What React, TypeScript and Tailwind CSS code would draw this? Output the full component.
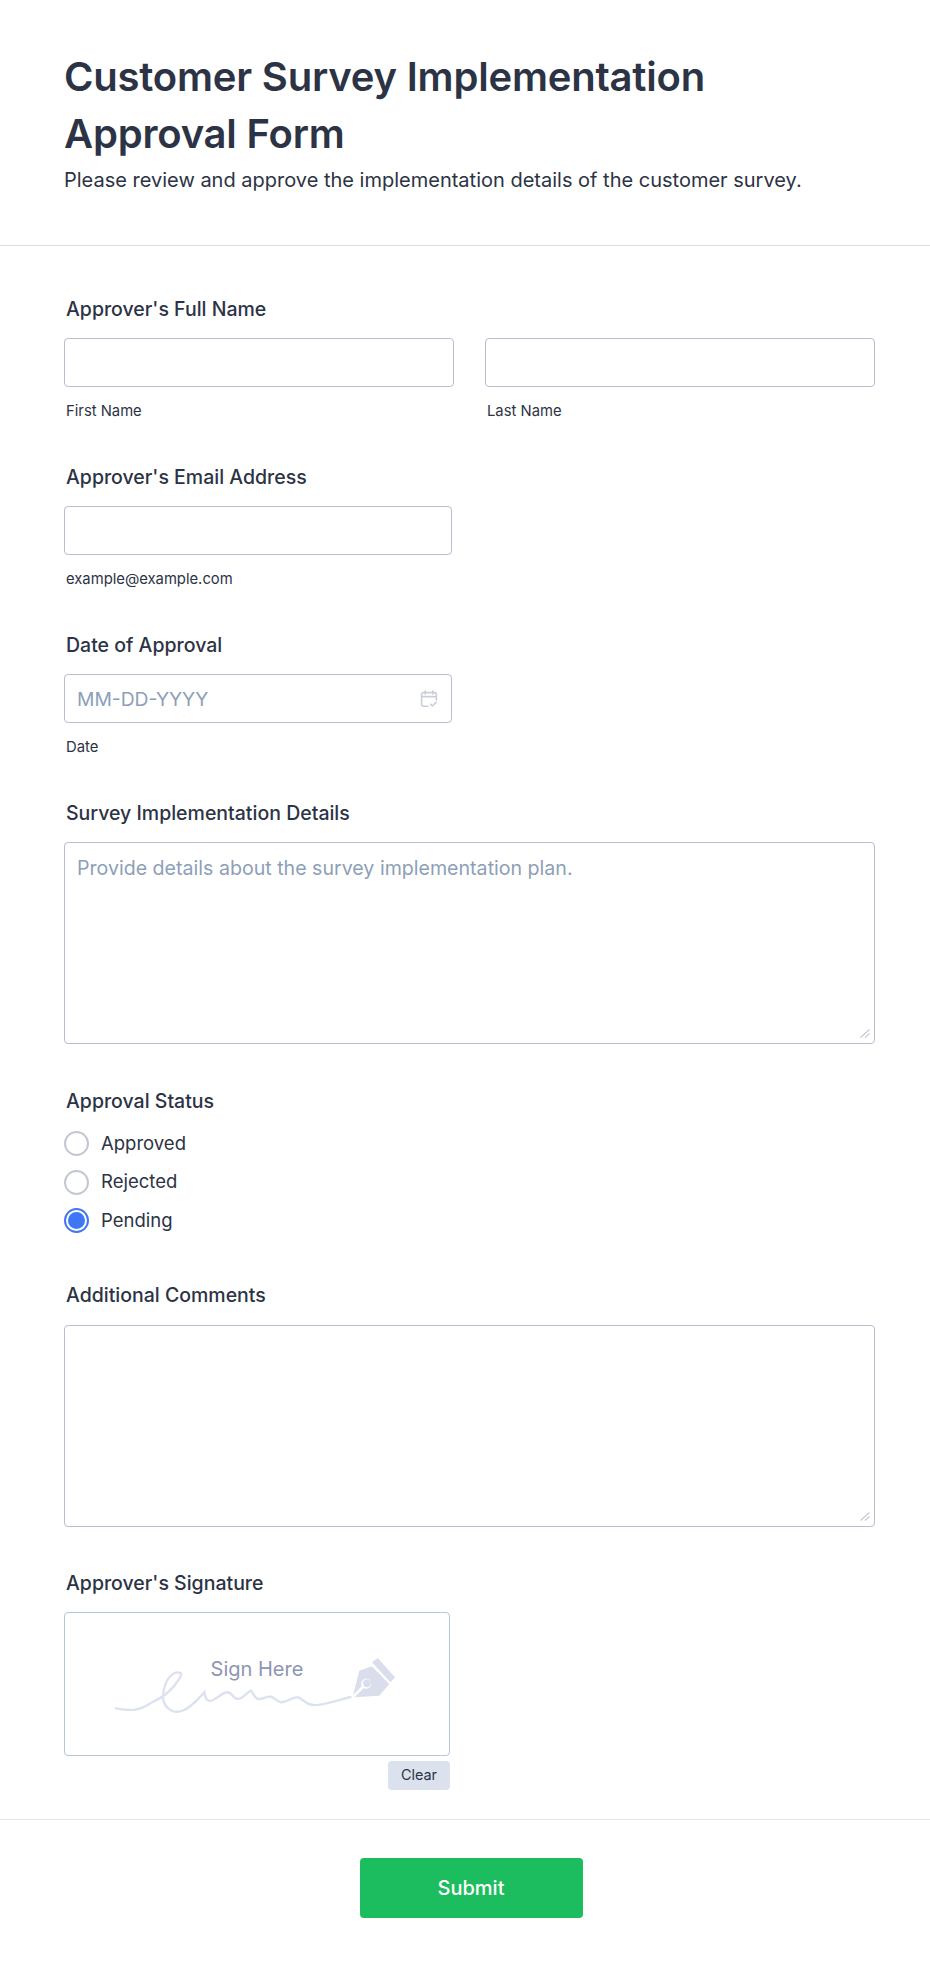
const Label = ({ children }: { children: React.ReactNode }) => (
    <label className="block pl-[2px] text-[19.5px] leading-[28px] font-medium text-[#2c3345] mb-[15.5px]">{children}</label>
);

const Sub = ({ children }: { children: React.ReactNode }) => (
    <div className="pl-[2px] mt-[14.5px] text-[14.8px] leading-[18px] text-[#2c3345]">{children}</div>
);

const inputClass =
    "block w-full h-[49px] rounded-[4px] border border-[#b8bdcf] bg-white px-[12px] text-[19.3px] outline-none placeholder:text-[#8d9fb8]";

function TextArea({ placeholder }: { placeholder?: string }) {
    return (
        <div className="relative">
            <textarea
                className="block w-full h-[202px] rounded-[4px] border border-[#b8bdcf] bg-white px-[12px] py-[11px] text-[19.6px] leading-[28px] outline-none resize-none placeholder:text-[#8d9fb8]"
                placeholder={placeholder}
            />
            <svg width="10" height="9" viewBox="0 0 10 9" fill="none" stroke="#c4c8d6" strokeWidth="1.1" className="absolute right-[5px] bottom-[6px]">
                <path d="M0.5 8.5L9.5 0.5M5 8.5L9.5 4.5" />
            </svg>
        </div>
    );
}

function Radio({ label, checked }: { label: string; checked?: boolean }) {
    return (
        <div className="flex items-center gap-[12px] h-[38.5px] text-[18.5px] text-[#2c3345]">
            {checked ? (
                <span className="flex items-center justify-center w-[25px] h-[25px] rounded-full border-2 border-[#3e76f6]">
                    <span className="w-[17px] h-[17px] rounded-full bg-[#3e76f6]" />
                </span>
            ) : (
                <span className="w-[25px] h-[25px] rounded-full border-2 border-[#c3c7d2]" />
            )}
            <span>{label}</span>
        </div>
    );
}

function CalendarIcon() {
    return (
        <svg width="18" height="18" viewBox="0 0 18 18" fill="none" stroke="#c9ced9" strokeWidth="1.6" strokeLinecap="round" strokeLinejoin="round">
            <path d="M8 16.2H3.6A2 2 0 0 1 1.6 14.2V4.6a2 2 0 0 1 2-2h10.8a2 2 0 0 1 2 2v5.4" />
            <path d="M1.6 6.6h14.8M5.2 1v3M12.8 1v3" />
            <path d="M10.6 14.2l1.8 1.8 3.6-3.6" />
        </svg>
    );
}

// coordinates are page pixels of the signature box area
function SignatureArt() {
    return (
        <svg width="290" height="60" viewBox="110 1655 290 60" fill="none" className="block">
            <path
                d="M115 1709.3 C 122 1711 128 1711 133.3 1710.7 C 141 1710 146 1706.5 150 1704 C 156 1701 161 1698 165 1695 C 171 1690 175 1685 177.5 1681 C 180.5 1677 181 1674 178 1673.5 C 172 1672.5 166 1679 163.5 1688 C 161 1697 162 1705 167 1709 C 171 1713 177 1713.5 182 1711.5 C 191 1708 198 1699 203.3 1693.3 C 204 1698 205 1702 209 1702 C 214 1702 220 1693.5 226.7 1693.3 C 231 1693.3 232 1700 237 1700 C 242 1700 246 1693 250 1691.7 C 252 1693 253 1700 258 1700 C 262 1700 266 1697 270 1697.7 C 273 1698.5 276 1702.5 280 1703.3 C 286 1703.5 291 1698 296.7 1698.3 C 301 1699 304 1705 312 1706 C 320 1707 334 1702 349.5 1698"
                stroke="#dde2f0"
                strokeWidth="2.4"
                strokeLinecap="round"
            />
            <path fill="#dadeec" d="M371 1663.3 L376.7 1659 L394 1678.3 L389.3 1683.3 Z" />
            <path
                fill="#dadeec"
                fillRule="evenodd"
                d="M358.3 1671.7 L370.7 1667.3 L388.3 1685 L378.3 1696.7 L353.5 1698.3 L362.8 1689 A5 5 0 1 0 360.8 1687 L352 1696.5 Z M366 1680.2 a4 4 0 1 0 0.01 0 Z"
            />
        </svg>
    );
}

export default function App() {
    return (
        <div className="w-[930px] min-h-[1966px] bg-white font-['Inter',sans-serif] text-[#2c3345]">
            <header className="h-[246px] border-b border-[#dadee8] px-[64px] pt-[48px]">
                <h1 className="text-[40px] leading-[57px] font-semibold tracking-[-0.2px]">
                    Customer Survey Implementation
                    <br />
                    Approval Form
                </h1>
                <p className="text-[20px] leading-[30px] mt-[3px]">
                    Please review and approve the implementation details of the customer survey.
                </p>
            </header>

            <main className="pl-[64px] pr-[55px] pt-[48.5px]">
                <section>
                    <Label>Approver's Full Name</Label>
                    <div className="grid grid-cols-2 gap-[31px]">
                        <div>
                            <input className={inputClass} />
                            <Sub>First Name</Sub>
                        </div>
                        <div>
                            <input className={inputClass} />
                            <Sub>Last Name</Sub>
                        </div>
                    </div>
                </section>

                <section className="mt-[43px] w-[388px]">
                    <Label>Approver's Email Address</Label>
                    <input className={inputClass} />
                    <Sub>example@example.com</Sub>
                </section>

                <section className="mt-[43px] w-[388px]">
                    <Label>Date of Approval</Label>
                    <div className="relative">
                        <input className={inputClass} placeholder="MM-DD-YYYY" />
                        <span className="absolute right-[14px] top-[16px]">
                            <CalendarIcon />
                        </span>
                    </div>
                    <Sub>Date</Sub>
                </section>

                <section className="mt-[43px]">
                    <Label>Survey Implementation Details</Label>
                    <TextArea placeholder="Provide details about the survey implementation plan." />
                </section>

                <section className="mt-[43px]">
                    <Label>Approval Status</Label>
                    <div className="-mt-[6px]">
                        <Radio label="Approved" />
                        <Radio label="Rejected" />
                        <Radio label="Pending" checked />
                    </div>
                </section>

                <section className="mt-[41px]">
                    <Label>Additional Comments</Label>
                    <TextArea />
                </section>

                <section className="mt-[42px] w-[386px]">
                    <Label>Approver's Signature</Label>
                    <div className="relative h-[143.5px] rounded-[4px] border border-[#b5c5de] bg-white">
                        <div className="pt-[41px] text-center text-[20px] leading-[30px] text-[#8d96b2]">Sign Here</div>
                        <div className="absolute left-[46px] top-[41px]">
                            <SignatureArt />
                        </div>
                    </div>
                    <div className="flex justify-end mt-[5px]">
                        <button className="w-[62px] h-[29px] rounded-[4px] bg-[#dce1ee] text-[14.4px] text-[#2c3345]">Clear</button>
                    </div>
                </section>
            </main>

            <footer className="mt-[29px] border-t border-[#e3e6ee] pt-[38px] flex justify-center">
                <button className="ml-[12px] w-[223px] h-[60px] rounded-[4px] bg-[#1bbd5e] text-white text-[20px] font-medium">Submit</button>
            </footer>
        </div>
    );
}
